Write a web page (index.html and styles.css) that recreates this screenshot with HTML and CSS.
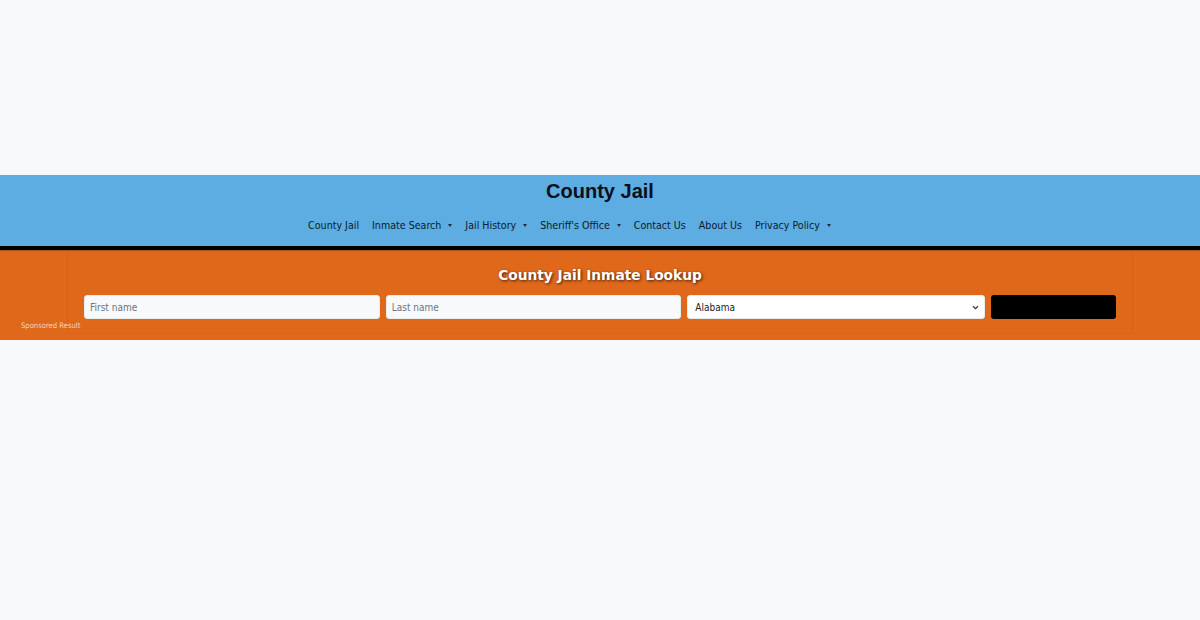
FILE: index.html
```html
<!DOCTYPE html>
<html lang="en">
<head>
<meta charset="utf-8">
<title>County Jail</title>
<link rel="stylesheet" href="styles.css">
</head>
<body>
<div class="top-space"></div>
<header class="site-header">
  <h1 class="site-title">County Jail</h1>
  <nav class="main-nav">
    <a class="nav-item" href="#">County Jail</a>
    <a class="nav-item has-sub" href="#">Inmate Search</a>
    <a class="nav-item has-sub" href="#">Jail History</a>
    <a class="nav-item has-sub" href="#">Sheriff's Office</a>
    <a class="nav-item" href="#">Contact Us</a>
    <a class="nav-item" href="#">About Us</a>
    <a class="nav-item has-sub" href="#">Privacy Policy</a>
  </nav>
</header>
<section class="lookup-band">
  <div class="lookup-box">
    <h2 class="lookup-title">County Jail Inmate Lookup</h2>
    <form class="lookup-form">
      <input class="field" type="text" placeholder="First name">
      <input class="field" type="text" placeholder="Last name">
      <select class="field select">
        <option>Alabama</option>
      </select>
      <button class="search-btn" type="button"></button>
    </form>
  </div>
  <span class="sponsored">Sponsored Result</span>
</section>
</body>
</html>
```
FILE: styles.css
```css
* { box-sizing: border-box; }
html, body { margin: 0; padding: 0; }
body {
  background: #f8f9fa;
  font-family: "DejaVu Sans Condensed", "DejaVu Sans", sans-serif;
  font-stretch: condensed;
  color: #111;
}
.top-space { height: 175px; }
.site-header {
  background: #5dade2;
  border-bottom: 4px solid #000;
  height: 75px;
  padding-top: 4px;
}
.site-title {
  margin: 0;
  text-align: center;
  font-family: "Liberation Sans", Arial, sans-serif;
  font-stretch: normal;
  font-weight: bold;
  font-size: 20px;
  line-height: 24px;
  color: #0a0f1a;
}
.main-nav {
  display: flex;
  justify-content: center;
  gap: 13px;
  margin-top: 15px;
  padding-right: 61px;
  font-size: 10.6px;
  line-height: 14px;
}
.nav-item {
  color: #0c1a2a;
  text-decoration: none;
  display: inline-flex;
  align-items: center;
}
.nav-item.has-sub::after {
  content: "";
  display: inline-block;
  margin-left: 7px;
  border-left: 2px solid transparent;
  border-right: 2px solid transparent;
  border-top: 3px solid #1a2a3a;
}
.lookup-band {
  position: relative;
  background: #e0681a;
  border-top: 1px solid #b0530f;
  height: 90px;
  padding: 0 67px 6px 67px;
}
.lookup-box {
  height: 100%;
  border-left: 1px solid #d5621a;
  border-right: 1px solid #d5621a;
  border-bottom: 1px solid #d8641a;
  padding: 15px 16px 0 16px;
}
.lookup-title {
  margin: 0;
  text-align: center;
  color: #fff;
  font-family: "DejaVu Sans", sans-serif;
  font-stretch: normal;
  font-size: 13.75px;
  line-height: 18px;
  font-weight: bold;
  text-shadow: 1px 1px 3px rgba(0,0,0,0.7);
}
.lookup-form {
  display: flex;
  gap: 6px;
  margin-top: 11px;
}
.field {
  flex: 1 1 0;
  min-width: 0;
  height: 24px;
  border: 1px solid #e9ecef;
  border-radius: 3px;
  background: #f8f9fa;
  padding: 0 5px;
  font-family: "DejaVu Sans Condensed", "DejaVu Sans", sans-serif;
  font-stretch: condensed;
  font-size: 10px;
  color: #333;
}
.field::placeholder { color: #6c757d; }
.select {
  appearance: none;
  -webkit-appearance: none;
  background-color: #fff;
  background-image: url("data:image/svg+xml,%3Csvg xmlns='http://www.w3.org/2000/svg' width='8' height='6' viewBox='0 0 8 6'%3E%3Cpath d='M1 1.5 L4 4.5 L7 1.5' fill='none' stroke='%23333' stroke-width='1.4'/%3E%3C/svg%3E");
  background-repeat: no-repeat;
  background-position: right 5px center;
  background-size: 7px 5px;
  color: #222;
  padding-left: 7px;
}
.search-btn {
  flex: 0 0 125px;
  height: 24px;
  background: #000;
  border: none;
  border-radius: 3px;
}
.sponsored {
  position: absolute;
  left: 21px;
  top: 70px;
  font-size: 7.6px;
  line-height: 10px;
  color: #f7d3b6;
}
```
